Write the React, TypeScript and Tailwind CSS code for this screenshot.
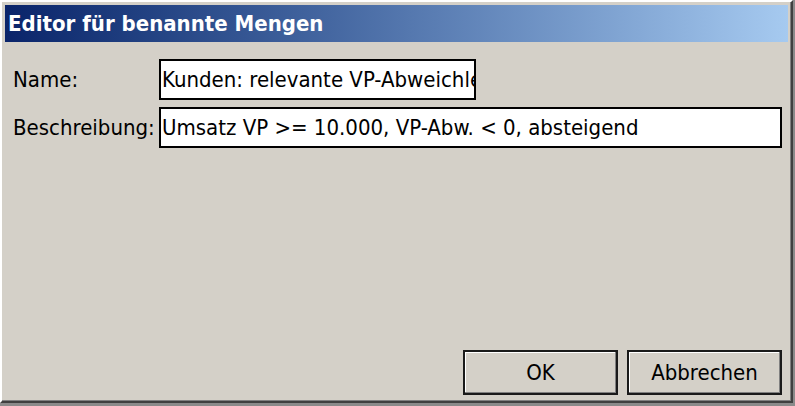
import * as React from "react";

const ui = {
  fontFamily: '"DejaVu Sans Condensed", "DejaVu Sans", Tahoma, sans-serif',
};

function Field({ value, className }: { value: string; className?: string }) {
  return (
    <div
      className={
        "flex h-[41px] items-center overflow-hidden whitespace-nowrap border-2 border-black bg-white pl-[1px] text-[22px] leading-none text-black " +
        (className ?? "")
      }
    >
      {value}
    </div>
  );
}

function DlgButton({ children }: { children: React.ReactNode }) {
  return (
    <button className="flex h-[45px] w-[155px] items-center justify-center border-2 border-[#1a1a1a] bg-[#d4d0c8] text-[22px] leading-none text-black shadow-[inset_-1px_-1px_0_#808080,inset_1px_1px_0_#ffffff]">
      {children}
    </button>
  );
}

export default function App() {
  return (
    <div className="h-[406px] w-[795px] bg-[#8a8a8a]" style={ui}>
      <div className="flex h-[403px] w-[793px] flex-col border-2 border-t-white border-l-white border-r-[#404040] border-b-[#404040] bg-[#d4d0c8] p-[3px] shadow-[inset_-1px_-1px_0_#808080]">
        {/* title bar */}
        <div className="flex h-[37px] items-center bg-gradient-to-r from-[#0a246a] to-[#a6caf0] pl-[3px]">
          <span className="text-[22px] font-bold leading-none text-white">Editor für benannte Mengen</span>
        </div>

        <div className="flex flex-1 flex-col pl-[8px] pr-[6px] pt-[17px] pb-[3px]">
          <div className="grid grid-cols-[146px_1fr] gap-y-[7px] text-[22px] text-black">
            <div className="flex items-center leading-none">Name:</div>
            <Field value="Kunden: relevante VP-Abweichler" className="w-[317px]" />
            <div className="flex items-center leading-none">Beschreibung:</div>
            <Field value="Umsatz VP >= 10.000, VP-Abw. < 0, absteigend" />
          </div>

          <div className="flex-1" />

          <div className="flex justify-end gap-[9px]">
            <DlgButton>OK</DlgButton>
            <DlgButton>Abbrechen</DlgButton>
          </div>
        </div>
      </div>
    </div>
  );
}
